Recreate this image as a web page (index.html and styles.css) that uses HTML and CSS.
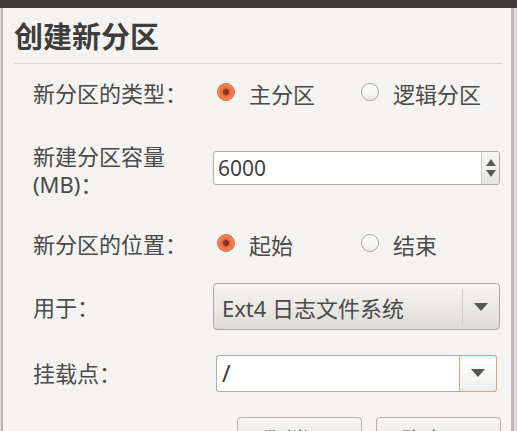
FILE: index.html
```html
<!DOCTYPE html>
<html lang="zh-CN">
<head>
<meta charset="utf-8">
<title>创建新分区</title>
<link rel="stylesheet" href="styles.css">
</head>
<body>
<div class="screen">
  <div class="topbar"></div>
  <div class="frame">
    <div class="dialog">
      <h1 class="title">创建新分区</h1>
      <div class="sep"></div>

      <div class="row r1">
        <span class="label">新分区的类型：</span>
        <div class="radios">
          <span class="radio-item first"><span class="radio checked"></span><span>主分区</span></span>
          <span class="radio-item"><span class="radio"></span><span>逻辑分区</span></span>
        </div>
      </div>

      <div class="row r2">
        <div class="label two-line">
          <div class="line">新建分区容量</div>
          <div class="line">(MB)：</div>
        </div>
        <div class="spin">
          <span class="spin-text">6000</span>
          <span class="spin-btns">
            <svg width="12" height="22" viewBox="0 0 12 22"><path d="M6 2 L11 9 L1 9 Z" fill="#5a5a58"/><path d="M1 13 L11 13 L6 20 Z" fill="#5a5a58"/></svg>
          </span>
        </div>
      </div>

      <div class="row r3">
        <span class="label">新分区的位置：</span>
        <div class="radios">
          <span class="radio-item first"><span class="radio checked"></span><span>起始</span></span>
          <span class="radio-item"><span class="radio"></span><span>结束</span></span>
        </div>
      </div>

      <div class="row r4">
        <span class="label">用于：</span>
        <div class="combo">
          <span class="combo-text">Ext4 日志文件系统</span>
          <span class="combo-arrow">
            <svg width="14" height="8" viewBox="0 0 14 8"><path d="M0 0 L14 0 L7 8 Z" fill="#555553"/></svg>
          </span>
        </div>
      </div>

      <div class="row r5">
        <span class="label">挂载点：</span>
        <div class="entry">
          <span class="entry-text">/</span>
          <span class="entry-drop">
            <svg width="14" height="8" viewBox="0 0 14 8"><path d="M0 0 L14 0 L7 8 Z" fill="#555553"/></svg>
          </span>
        </div>
      </div>

      <div class="buttons">
        <span class="btn cancel">取消(C)</span>
        <span class="btn ok">确定(O)</span>
      </div>
    </div>
  </div>
</div>
</body>
</html>
```

FILE: styles.css
```css
html, body {
  margin: 0;
  padding: 0;
}
body {
  width: 517px;
  height: 431px;
  overflow: hidden;
  background: #dddcd9;
  font-family: "Noto Sans", "Noto Sans CJK SC", sans-serif;
  color: #4a4a48;
}
.screen {
  width: 517px;
  height: 431px;
  display: flex;
  flex-direction: column;
  overflow: hidden;
}
.topbar {
  height: 8px;
  flex: none;
  background: #3c3b37;
}
.frame {
  flex: 1;
  margin-left: 1px;
  margin-right: 3px;
  border-left: 2px solid #b8b6b1;
  border-right: 3px solid #bebcb7;
  background: #f4f3f1;
  overflow: hidden;
}
.dialog {
  padding-left: 11px;
  display: flex;
  flex-direction: column;
}
.title {
  margin: 11px 0 0 0;
  font-size: 29px;
  line-height: 36px;
  font-weight: bold;
  color: #3d3d3b;
}
.sep {
  margin-top: 8px;
  width: 488px;
  height: 1px;
  background: #dcdad6;
}
.row {
  display: flex;
  align-items: center;
  padding-left: 19px;
  font-size: 22px;
}
.label {
  width: 180px;
  flex: none;
  line-height: 28px;
}
.two-line .line {
  height: 28px;
  line-height: 28px;
}
.r1 { height: 58px; }
.r2 {
  height: 91px;
  align-items: flex-start;
  padding-top: 20px;
  box-sizing: border-box;
}
.r3 { height: 62px; }
.r4 { height: 63px; }
.r5 { height: 70px; }

.radios {
  display: flex;
  align-items: center;
  margin-left: 4px;
}
.radio-item {
  display: flex;
  align-items: center;
  gap: 14px;
}
.radio-item.first {
  width: 144px;
}
.radio {
  width: 18px;
  height: 18px;
  box-sizing: border-box;
  border-radius: 50%;
  border: 1px solid #aaa69f;
  background: linear-gradient(#ffffff, #eeede9);
  flex: none;
  margin-top: -3px;
}
.radio.checked {
  border: 1px solid #d8673c;
  background: radial-gradient(circle closest-side, #8a3320 0, #8a3320 32%, #dd5c30 42%, #ee7040 60%, #f38a5c 100%);
}

.spin {
  margin-top: 9px;
  width: 287px;
  height: 34px;
  box-sizing: border-box;
  border: 1px solid #aeaca7;
  border-radius: 3px;
  background: #ffffff;
  display: flex;
  align-items: center;
}
.spin-text {
  flex: 1;
  padding-left: 4px;
  font-size: 21px;
  color: #3f3f3d;
}
.spin-btns {
  width: 17px;
  height: 100%;
  border-left: 1px solid #d0ceca;
  background: linear-gradient(#f7f6f5, #e6e4e0);
  display: flex;
  align-items: center;
  justify-content: center;
  border-radius: 0 2px 2px 0;
}

.combo {
  width: 287px;
  height: 47px;
  box-sizing: border-box;
  border: 1px solid #a9a7a2;
  border-radius: 4px;
  background: linear-gradient(#f6f5f3, #dedcd8);
  display: flex;
  align-items: center;
}
.combo-text {
  flex: 1;
  padding-left: 8px;
  color: #4a4a48;
}
.combo-arrow {
  width: 36px;
  height: 36px;
  border-left: 1px solid #cfcdc9;
  display: flex;
  align-items: center;
  justify-content: center;
}

.entry {
  margin-left: 3px;
  width: 281px;
  height: 37px;
  box-sizing: border-box;
  border: 1px solid #aeaca7;
  border-right: none;
  border-radius: 3px;
  background: #ffffff;
  display: flex;
  align-items: center;
}
.entry-text {
  flex: 1;
  padding-left: 5px;
  font-size: 23px;
  color: #333331;
}
.entry-drop {
  width: 38px;
  height: 37px;
  margin-top: -2px;
  margin-bottom: -2px;
  box-sizing: border-box;
  border: 1px solid #eb9c7b;
  border-radius: 3px;
  background: linear-gradient(#ffffff, #f0efed);
  display: flex;
  align-items: center;
  justify-content: center;
}

.buttons {
  margin-top: 9px;
  display: flex;
  padding-left: 223px;
  gap: 14px;
}
.btn {
  width: 125px;
  height: 36px;
  box-sizing: border-box;
  border: 1px solid #b2b0ab;
  border-radius: 4px;
  background: linear-gradient(#f7f6f5, #e4e2de);
  font-size: 22px;
  line-height: 22px;
  padding-top: 10px;
  text-align: center;
  color: #6a6a68;
}
```
